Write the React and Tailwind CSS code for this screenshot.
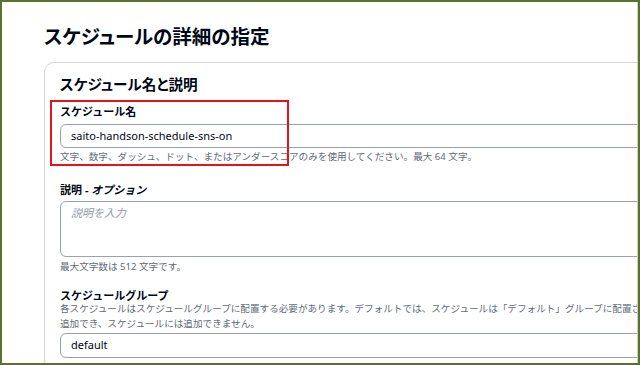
// App.jsx
import React from "react";

const font = { fontFamily: '"Noto Sans", "Noto Sans CJK JP", sans-serif' };

const Label = ({ children, className = "" }) => (
    <div className={`text-[11px] font-bold text-[#000716] ${className}`}>{children}</div>
);

const Help = ({ children, className = "" }) => (
    <div className={`text-[9.6px] text-[#5f6b7a] ${className}`}>{children}</div>
);

export default function App() {
    return (
        <div
            className="relative w-[640px] h-[365px] overflow-hidden bg-white border-2 border-[#5b7130]"
            style={font}
        >
            <div className="h-full border-r border-[#cfcfcf] overflow-hidden pl-[42px] pt-[22px]">
                <h1 className="text-[19.5px] leading-[26px] font-bold text-[#000716] whitespace-nowrap [font-feature-settings:'palt']">
                    スケジュールの詳細の指定
                </h1>

                {/* card */}
                <div className="mt-[12px] w-[720px] h-[400px] rounded-[10px] border border-[#d5d5d5] pl-[15px] pt-[10px]">
                    <h2 className="text-[14.6px] leading-[22px] font-bold text-[#000716] [font-feature-settings:'palt']">
                        スケジュール名と説明
                    </h2>

                    <Label className="mt-[9px] leading-[16px]">スケジュール名</Label>
                    <div className="mt-[4px] h-[24px] rounded-[6px] border border-[#9aa3ad] flex items-center pl-[10px]">
                        <span className="text-[11px] text-[#000716]">saito-handson-schedule-sns-on</span>
                    </div>
                    <Help className="mt-[2px] leading-[14px] whitespace-nowrap">
                        文字、数字、ダッシュ、ドット、またはアンダースコアのみを使用してください。最大 64 文字。
                    </Help>

                    <Label className="mt-[18px] leading-[16px]">
                        説明 <span className="italic">- オプション</span>
                    </Label>
                    <div className="mt-[3px] h-[56px] rounded-[6px] border border-[#9aa3ad] pl-[10px] pt-[4px] text-[11px] leading-[14px]">
                        <span className="italic text-[#8d99a8]">説明を入力</span>
                    </div>
                    <Help className="mt-[3px] leading-[14px]">最大文字数は 512 文字です。</Help>

                    <Label className="mt-[16px] leading-[12px]">スケジュールグループ</Label>
                    <Help className="mt-[-1px] leading-[15px] whitespace-nowrap">
                        <div>
                            各スケジュールはスケジュールグループに配置する必要があります。デフォルトでは、スケジュールは「デフォルト」グループに配置されます。グループはスケジュールグループにのみ
                        </div>
                        <div>追加でき、スケジュールには追加できません。</div>
                    </Help>
                    <div className="mt-[2px] h-[25px] rounded-[6px] border border-[#9aa3ad] flex items-center pl-[10px]">
                        <span className="text-[11px] text-[#000716]">default</span>
                    </div>
                </div>
            </div>

            {/* annotation box */}
            <div className="absolute left-[48px] top-[98px] w-[239px] h-[66px] border-2 border-[#e3141b]" />
        </div>
    );
}
